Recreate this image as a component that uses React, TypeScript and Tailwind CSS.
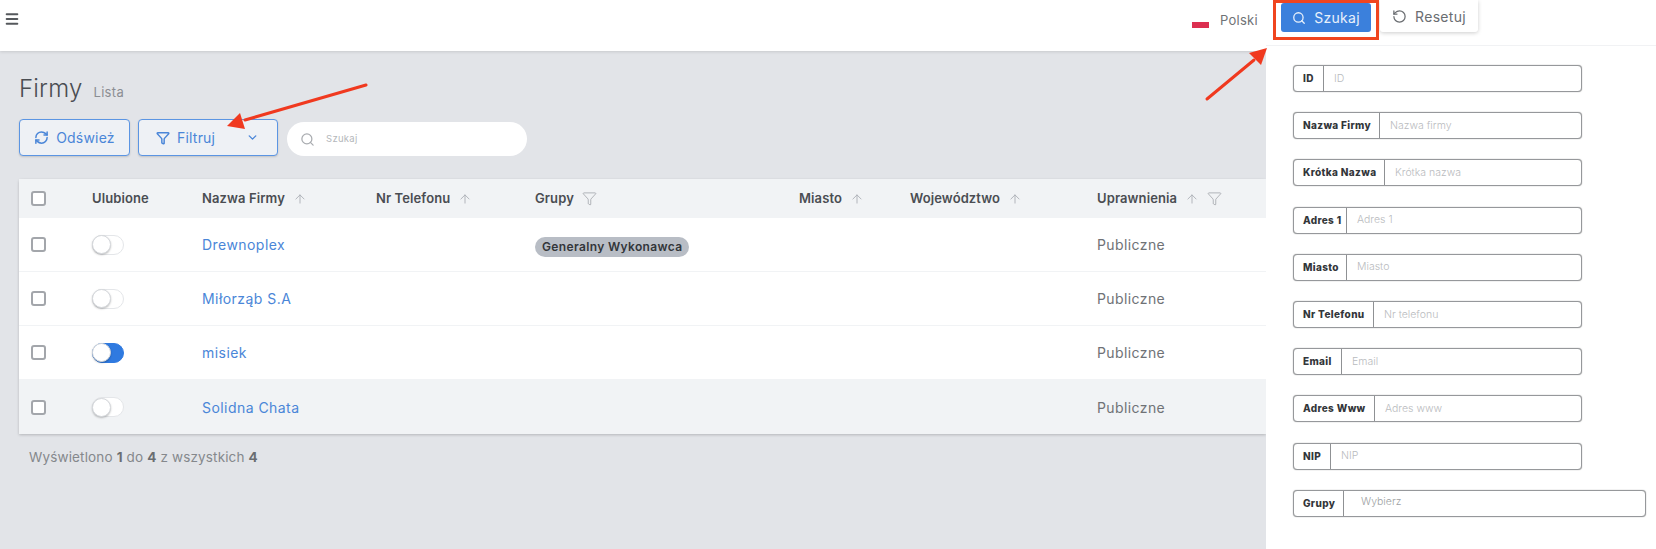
import React from "react";
import { ArrowUp, ChevronDown, Filter, Menu, RefreshCw, RotateCcw, Search } from "lucide-react";

const font = { fontFamily: '"Inter", "Open Sans", sans-serif' };

const companies = [
  { name: "Drewnoplex", on: false, group: "Generalny Wykonawca", bg: "bg-white" },
  { name: "Miłorząb S.A", on: false, group: "", bg: "bg-white" },
  { name: "misiek", on: true, group: "", bg: "bg-white" },
  { name: "Solidna Chata", on: false, group: "", bg: "bg-[#f1f3f5]" },
];

const fields = [
  { label: "ID", placeholder: "ID", w: "w-[30px]" },
  { label: "Nazwa Firmy", placeholder: "Nazwa firmy", w: "w-[86px]" },
  { label: "Krótka Nazwa", placeholder: "Krótka nazwa", w: "w-[91px]" },
  { label: "Adres 1", placeholder: "Adres 1", w: "w-[53px]" },
  { label: "Miasto", placeholder: "Miasto", w: "w-[53px]" },
  { label: "Nr Telefonu", placeholder: "Nr telefonu", w: "w-[80px]" },
  { label: "Email", placeholder: "Email", w: "w-[48px]" },
  { label: "Adres Www", placeholder: "Adres www", w: "w-[81px]" },
  { label: "NIP", placeholder: "NIP", w: "w-[37px]" },
];

const gridCols = "grid grid-cols-[61px_110px_174px_159px_264px_111px_187px_1fr] items-center pl-3";

const HeadCell = ({ label, sort, filter }: { label?: string; sort?: boolean; filter?: boolean }) => (
  <div className="flex items-center gap-2 text-[13px] font-semibold tracking-[0.1px] text-[#4a4d52]">
    <span>{label}</span>
    {sort && <ArrowUp size={14} strokeWidth={1.5} className="text-[#a9adb3]" />}
    {filter && <Filter size={15} strokeWidth={1} className="text-[#8b8f95]" />}
  </div>
);

const CheckBox = () => (
  <span className="block w-[15px] h-[15px] rounded-[3px] border-2 border-[#a3a6ab] bg-white" />
);

const Toggle = ({ on }: { on: boolean }) => (
  <span
    className={`flex items-center w-[32px] h-[20px] rounded-full border ${
      on ? "bg-[#2f7ae0] border-[#2f7ae0]" : "bg-white border-[#e4e6e9]"
    }`}
  >
    <span className="block w-[19px] h-[19px] -ml-px rounded-full bg-white border border-[#d5d8dc] shadow-[0_1px_2px_rgba(0,0,0,0.25)]" />
  </span>
);

const Field = ({ label, w, placeholder, wide }: { label: string; w: string; placeholder: string; wide?: boolean }) => (
  <div
    className={`flex h-[27px] border border-[#96989b] shadow-[0_0_1px_rgba(0,0,0,0.5)] rounded-[4px] bg-white ${wide ? "w-[353px]" : "w-[289px]"}`}
  >
    <div className={`${w} shrink-0 flex items-center pl-[9px] border-r border-[#8f9194] text-[10px] font-extrabold tracking-[0.35px] text-[#33363a] whitespace-nowrap`}>
      {label}
    </div>
    <div className={`flex-1 text-[10.5px] font-light ${wide ? "pl-[17px] pt-[3px] text-[#9d9fa3]" : "pl-[10px] flex items-center text-[#b9bbbe]"}`}>
      {placeholder}
    </div>
  </div>
);

export default function App() {
  return (
    <div className="relative flex w-[1656px] h-[549px] overflow-hidden bg-[#e2e4e8]" style={font}>
      <main className="flex-1 min-w-0 flex flex-col">
        {/* top bar */}
        <header className="h-[51px] shrink-0 bg-white shadow-[0_1px_3px_rgba(0,0,0,0.12)] flex items-start justify-between pl-[4px] pr-[8px]">
          <Menu size={16} strokeWidth={3} className="mt-[11px] text-[#55585c]" />
          <div className="flex items-center gap-[11px] mt-[11px] text-[13px] tracking-[0.3px] text-[#6f7276]">
            <span className="w-[17px] h-[12px] flex flex-col mt-[2px]">
              <span className="h-[6px] bg-white" />
              <span className="h-[6px] bg-[#dc2f50]" />
            </span>
            Polski
          </div>
        </header>

        <div className="pt-[23px] pl-[19px]">
          <div className="flex items-baseline gap-[11px]">
            <h1 className="text-[24px] leading-[30px] font-light tracking-[0.2px] text-[#4a4d52]">Firmy</h1>
            <span className="text-[13px] tracking-[0.3px] text-[#8b8e93]">Lista</span>
          </div>

          {/* toolbar */}
          <div className="flex items-start mt-[15px]">
            <button className="w-[111px] h-[37px] flex items-center justify-center gap-[7px] rounded-[4px] border border-[#5b95e3] bg-[#eef1f5] text-[14px] tracking-[0.2px] text-[#4a86d8] shadow-[0_1px_2px_rgba(0,0,0,0.15)]">
              <RefreshCw size={15} strokeWidth={2.4} />
              Odśwież
            </button>
            <button className="ml-[8px] w-[140px] h-[37px] flex items-center pl-[17px] pr-[18px] rounded-[4px] border border-[#5b95e3] bg-[#eef1f5] text-[14px] tracking-[0.2px] text-[#4a86d8] shadow-[0_1px_2px_rgba(0,0,0,0.15)]">
              <Filter size={14} strokeWidth={2.5} />
              <span className="ml-[7px]">Filtruj</span>
              <ChevronDown size={13} strokeWidth={2.5} className="ml-auto" />
            </button>
            <div className="ml-[9px] mt-[3px] w-[240px] h-[34px] flex items-center rounded-full bg-white pl-[13px]">
              <Search size={15} className="text-[#a9acb0]" />
              <span className="ml-[11px] text-[9.5px] tracking-[0.3px] text-[#b4b7bb]">Szukaj</span>
            </div>
          </div>

          {/* table */}
          <div className="mt-[23px] rounded-t-[3px] shadow-[0_1px_3px_rgba(0,0,0,0.2)]">
            <div className={`${gridCols} h-[39px] bg-[#f1f3f5]`}>
              <CheckBox />
              <HeadCell label="Ulubione" />
              <HeadCell label="Nazwa Firmy" sort />
              <HeadCell label="Nr Telefonu" sort />
              <HeadCell label="Grupy" filter />
              <HeadCell label="Miasto" sort />
              <HeadCell label="Województwo" sort />
              <HeadCell label="Uprawnienia" sort filter />
            </div>
            {companies.map((c) => (
              <div key={c.name} className={`${gridCols} h-[54px] ${c.bg} border-b border-[#f1f3f5] last:border-b-0`}>
                <CheckBox />
                <Toggle on={c.on} />
                <a className="text-[14px] tracking-[0.45px] text-[#4a86d8]">{c.name}</a>
                <span />
                <div>
                  {c.group && (
                    <span className="inline-flex h-[20px] -mt-[11px] px-[7px] items-center rounded-full bg-[#b8bdc5] text-[12px] font-semibold tracking-[0.35px] text-[#33363a]">
                      {c.group}
                    </span>
                  )}
                </div>
                <span />
                <span />
                <span className="text-[14px] tracking-[0.4px] text-[#6f7276]">Publiczne</span>
              </div>
            ))}
          </div>

          <p className="mt-[13px] pl-[10px] text-[13.5px] tracking-[0.15px] text-[#85888c]">
            Wyświetlono <b className="text-[#6a6d71]">1</b> do <b className="text-[#6a6d71]">4</b> z wszystkich{" "}
            <b className="text-[#6a6d71]">4</b>
          </p>
        </div>
      </main>

      {/* filter drawer */}
      <aside className="w-[390px] shrink-0 bg-white">
        <div className="h-[46px] border-b border-[#f1f2f4] flex items-start pl-[15px]">
          <button className="mt-[3px] w-[90px] h-[29px] flex items-center justify-center gap-[8px] rounded-[3px] bg-[#3b80dc] text-[14px] tracking-[0.3px] text-[#e8f0fb]">
            <Search size={14} strokeWidth={2.2} />
            Szukaj
          </button>
          <button className="ml-[9px] w-[98px] h-[32px] flex items-center justify-center gap-[8px] rounded-b-[3px] bg-white text-[14px] tracking-[0.3px] text-[#6a6d71] shadow-[0_1px_4px_rgba(0,0,0,0.2)]">
            <RotateCcw size={15} strokeWidth={2} />
            Resetuj
          </button>
        </div>
        <div className="pt-[19px] pl-[27px] flex flex-col gap-[20.2px]">
          {fields.map((f) => (
            <Field key={f.label} {...f} />
          ))}
          <Field label="Grupy" w="w-[50px]" placeholder="Wybierz" wide />
        </div>
      </aside>

      {/* annotations drawn over the screenshot */}
      <div className="absolute left-[1273px] top-0 w-[106px] h-[40px] border-[3px] border-[#f0451f]" />
      <svg className="absolute inset-0 pointer-events-none" width="1656" height="549" fill="none">
        <line x1="366" y1="85" x2="245" y2="120" stroke="#f0391f" strokeWidth="3" strokeLinecap="round" />
        <polygon points="227,126 240,113 245,129" fill="#f0391f" />
        <line x1="1207" y1="99" x2="1254" y2="60" stroke="#f0391f" strokeWidth="3" strokeLinecap="round" />
        <polygon points="1267,48 1261,65 1249,53" fill="#f0391f" />
      </svg>
    </div>
  );
}
